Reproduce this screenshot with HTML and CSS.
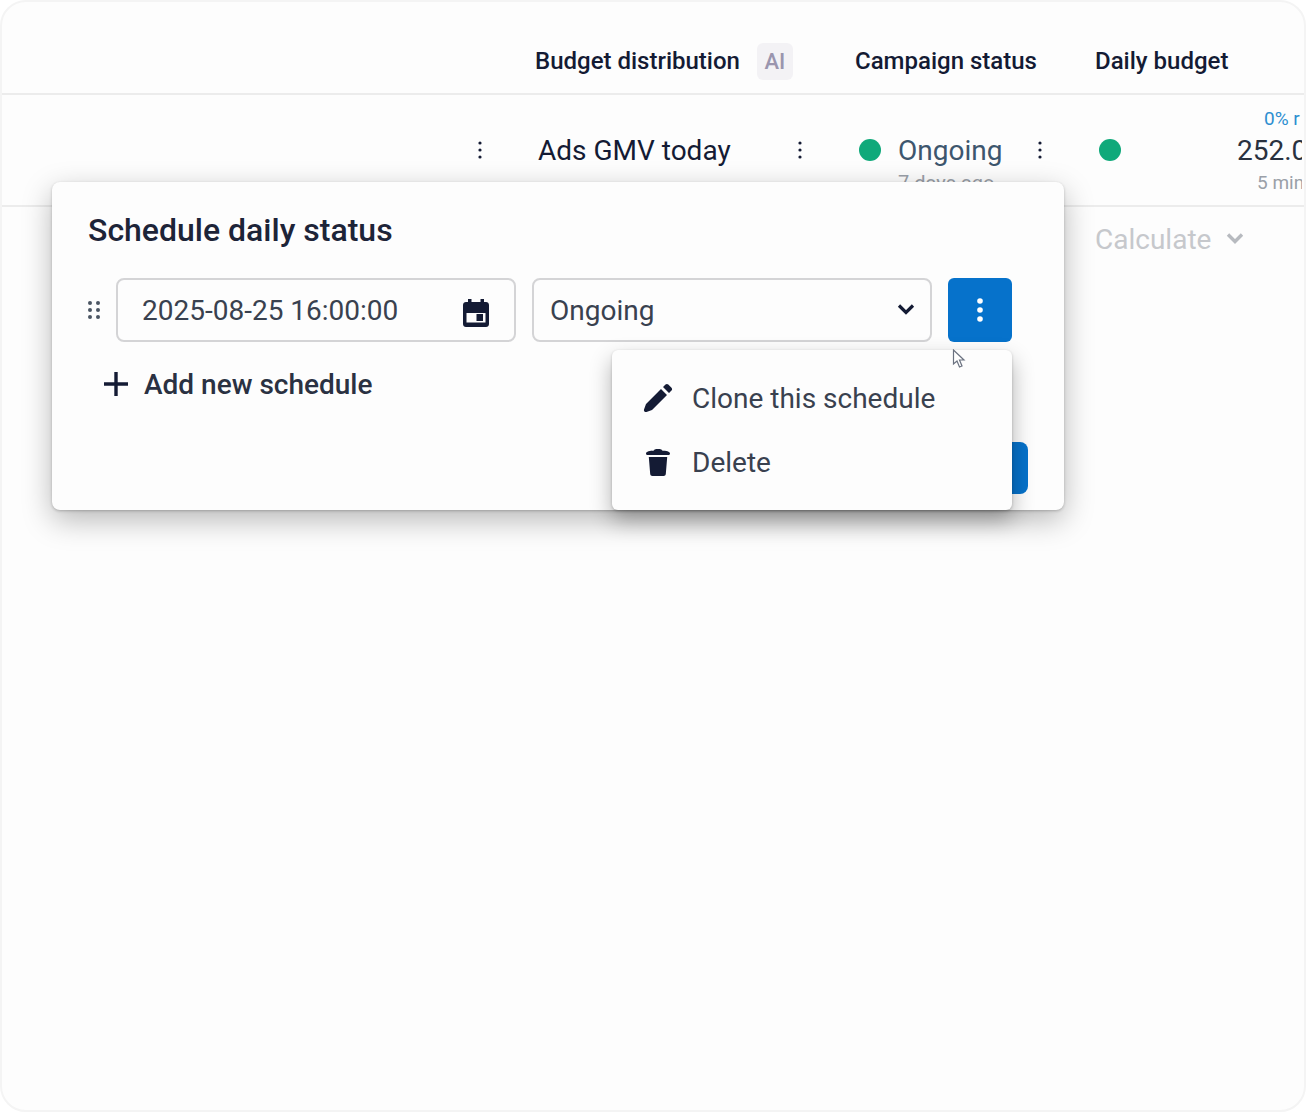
FILE: index.html
```html
<!DOCTYPE html>
<html lang="en">
<head>
<meta charset="UTF-8">
<title>Schedule daily status</title>
<link rel="stylesheet" href="styles.css">
</head>

<body>
  <div class="frame">
    <!-- table header -->
    <div class="table-row head-row">
      <div class="cell"></div>
      <div class="cell col-budget">Budget distribution <span class="ai-tag">AI</span></div>
      <div class="cell col-status">Campaign status</div>
      <div class="cell col-daily">Daily budget</div>
    </div>

    <!-- campaign row -->
    <div class="table-row body-row">
      <div class="cell cell-end">
        <svg class="kebab" viewBox="0 0 4 20"><circle cx="2" cy="3" r="1.6"/><circle cx="2" cy="10" r="1.6"/><circle cx="2" cy="17" r="1.6"/></svg>
      </div>
      <div class="cell col-budget cell-split">
        <span class="ads-text">Ads GMV today</span>
        <svg class="kebab" viewBox="0 0 4 20"><circle cx="2" cy="3" r="1.6"/><circle cx="2" cy="10" r="1.6"/><circle cx="2" cy="17" r="1.6"/></svg>
      </div>
      <div class="cell col-status cell-split">
        <span class="status">
          <i class="dot"></i>
          <span class="status-text">Ongoing<small>7 days ago</small></span>
        </span>
        <svg class="kebab" viewBox="0 0 4 20"><circle cx="2" cy="3" r="1.6"/><circle cx="2" cy="10" r="1.6"/><circle cx="2" cy="17" r="1.6"/></svg>
      </div>
      <div class="cell col-daily cell-split">
        <i class="dot"></i>
        <span class="amount">
          <em>0% r</em>
          <b>252.00</b>
          <small>5 min</small>
        </span>
      </div>
    </div>

    <!-- totals row -->
    <div class="table-row foot-row">
      <div class="cell"></div>
      <div class="cell"></div>
      <div class="cell"></div>
      <div class="cell col-daily calc">
        Calculate
        <svg class="calc-chevron" viewBox="0 0 18 12"><path d="M2 2.500l7 7 7-7" fill="none" stroke="currentColor" stroke-width="3.400"/></svg>
      </div>
    </div>

    <!-- dialog -->
    <div class="dialog">
      <h2>Schedule daily status</h2>

      <div class="schedule-line">
        <svg class="grip" viewBox="0 0 14 20"><circle cx="2" cy="3" r="2"/><circle cx="10" cy="3" r="2"/><circle cx="2" cy="10" r="2"/><circle cx="10" cy="10" r="2"/><circle cx="2" cy="17" r="2"/><circle cx="10" cy="17" r="2"/></svg>
        <div class="field field-date">
          <span>2025-08-25 16:00:00</span>
          <svg class="cal-icon" viewBox="0 0 28 28"><path d="M6 0h3.500v3h9V0H22v3h2c1.700 0 3 1.300 3 3v19c0 1.700-1.300 3-3 3H4c-1.700 0-3-1.300-3-3V6c0-1.700 1.300-3 3-3h2zM4.500 14v9.500h19V14zm10 1H21v7h-6.500z" fill-rule="evenodd"/></svg>
        </div>
        <div class="field field-select">
          <span>Ongoing</span>
          <svg class="sel-chevron" viewBox="0 0 18 12"><path d="M2 2.500l7 7 7-7" fill="none" stroke="currentColor" stroke-width="3.200"/></svg>
        </div>
        <button class="more-btn" type="button">
          <svg viewBox="0 0 6 24"><circle cx="3" cy="3" r="2.800"/><circle cx="3" cy="12" r="2.800"/><circle cx="3" cy="21" r="2.800"/></svg>
        </button>
      </div>

      <div class="add-line">
        <svg class="plus" viewBox="0 0 24 24"><path d="M12 0v24M0 12h24" fill="none" stroke="currentColor" stroke-width="3.400"/></svg>
        Add new schedule
      </div>

      <div class="dialog-foot">
        <button class="save-btn" type="button"></button>
      </div>

      <!-- action menu -->
      <div class="menu">
        <div class="menu-item">
          <svg class="menu-icon" viewBox="0 0 30 30"><path d="M1 26.500L3 21 18 6l6 6L9 27l-5.500 2c-1.500.500-3-.800-2.500-2.500zM20 4l2.500-2.500c.800-.800 2-.800 2.800 0l3.200 3.200c.800.800.800 2 0 2.800L26 10z"/></svg>
          Clone this schedule
        </div>
        <div class="menu-item">
          <svg class="menu-icon" viewBox="0 0 30 30"><path d="M11 3.500C11 2.500 12 2 15 2s4 .500 4 1.500c4 .300 8 1 8 3 0 1-.800 1.500-2 1.500H5C3.800 8 3 7.500 3 6.500c0-2 4-2.700 8-3zM5.800 10h18.400l-1.400 17c-.100 1.200-1 2-2.200 2H9.400c-1.200 0-2.100-.800-2.200-2z"/></svg>
          Delete
        </div>
      </div>
    </div>

    <!-- mouse pointer -->
    <svg class="pointer" viewBox="0 0 14 20"><path d="M1.500 1v14l3.500-3 2.500 6 2.500-1-2.500-6h4.500z" fill="#fff" stroke="#6b7280" stroke-width="1.200"/></svg>
  </div>
</body>
</html>
```

FILE: styles.css
```css
/* page */
*{ box-sizing:border-box }
html,body{ height:100% }
body{
  margin:0;
  background:#fff;
  color:#141b34;
  font-family:Roboto, "Liberation Sans", sans-serif;
}

.frame{
  position:relative;
  width:1306px;
  height:1112px;
  overflow:hidden;
  background:#fdfdfd;
  border:2px solid #f4f4f4;
  border-radius:26px;
}

/* table */
.table-row{
  display:grid;
  grid-template-columns:518px 320px 240px 1fr;
  border-bottom:2px solid #ececec;
}
.head-row{
  height:93px;
  padding-top:44px;
  font-size:24px;
  font-weight:500;
  line-height:30px;
}
.body-row{ height:112px }
.foot-row{
  height:66px;
  border-bottom:0;
}
.cell{ padding-left:15px; white-space:nowrap }
.cell-end{
  display:flex;
  justify-content:flex-end;
  align-items:center;
  padding-right:38px;
}
.cell-split{
  display:flex;
  align-items:center;
  justify-content:space-between;
  padding-right:38px;
}
.head-row .cell{ display:flex; align-items:flex-start }
.ai-tag{
  display:inline-block;
  width:36px;
  height:37px;
  margin:-3px 0 0 17px;
  line-height:37px;
  text-align:center;
  background:#f3f2f5;
  border-radius:6px;
  color:#9a95ae;
  font-weight:500;
  font-size:22px;
}
.kebab{
  width:4px;
  height:20px;
  fill:#141b34;
}
.ads-text{
  margin-left:3px;
  font-size:28px;
}
.status{
  display:flex;
  align-items:center;
  gap:17px;
  margin-left:4px;
}
.dot{
  display:block;
  width:22px;
  height:22px;
  flex:none;
  border-radius:50%;
  background:#0fa97a;
}
.status-text{
  position:relative;
  font-size:28px;
  color:#3d566e;
}
.status-text small{
  position:absolute;
  left:0;
  top:37px;
  font-size:20px;
  color:#9aa0a8;
  white-space:nowrap;
}
.col-daily.cell-split{
  justify-content:flex-start;
  margin-right:2px;
  padding-right:0;
  padding-left:19px;
  overflow:hidden;
}
.amount{
  display:flex;
  flex-direction:column;
  margin:2px 0 0 116px;
  font-size:28px;
}
.amount em{
  font-style:normal;
  font-size:19px;
  line-height:26px;
  margin-left:27px;
  color:#2e8fd0;
}
.amount b{ font-weight:400; line-height:38px; color:#29313f }
.amount small{
  font-size:19px;
  line-height:26px;
  margin-left:20px;
  color:#9aa0a8;
}
.calc{
  display:flex;
  align-items:center;
  gap:15px;
  height:64px;
  font-size:28px;
  color:#c6c8cc;
}
.calc-chevron{ width:18px; height:12px; margin-top:-2px; color:#b7babf }

/* dialog */
.dialog{
  position:absolute;
  left:50px;
  top:180px;
  width:1012px;
  height:328px;
  padding:28px 36px 0;
  background:#fdfdfd;
  border-radius:8px;
  box-shadow:0 1px 3px rgba(0,0,0,.22), 0 10px 30px rgba(0,0,0,.28);
}
.dialog h2{
  margin:0 0 28px;
  font-size:32px;
  line-height:40px;
  font-weight:500;
  color:#1d2438;
}
.schedule-line{
  display:flex;
  align-items:center;
  gap:16px;
  height:64px;
}
.grip{
  width:14px;
  height:20px;
  margin-right:-2px;
  fill:#4b5563;
}
.field{
  display:flex;
  align-items:center;
  justify-content:space-between;
  width:400px;
  height:64px;
  border:2px solid #d4d4d6;
  border-radius:8px;
  font-size:28px;
  color:#39414f;
}
.field-date{ padding:0 24px }
.field-select{ padding:0 15px 0 16px }
.cal-icon{ width:28px; height:28px; margin-top:6px; fill:#141b34 }
.sel-chevron{ width:18px; height:12px; margin-top:-3px; color:#141b34 }
.more-btn{
  display:flex;
  align-items:center;
  justify-content:center;
  width:64px;
  height:64px;
  padding:0;
  border:0;
  border-radius:6px;
  background:#0672cb;
}
.more-btn svg{ width:6px; height:24px; fill:#fff }
.add-line{
  display:flex;
  align-items:center;
  gap:16px;
  margin:25px 0 0 16px;
  height:34px;
  font-size:28px;
  font-weight:500;
  color:#2a3142;
}
.plus{ width:24px; height:24px; color:#141b34 }
.dialog-foot{
  display:flex;
  justify-content:flex-end;
  margin-top:41px;
}
.save-btn{
  width:120px;
  height:52px;
  border:0;
  border-radius:8px;
  background:#0672cb;
}

/* action menu */
.menu{
  position:absolute;
  left:560px;
  top:168px;
  width:400px;
  height:160px;
  padding:16px 0;
  background:#fdfdfd;
  border-radius:6px;
  box-shadow:0 1px 3px rgba(0,0,0,.2), 0 10px 22px rgba(0,0,0,.3);
}
.menu-item{
  display:flex;
  align-items:center;
  gap:19px;
  height:64px;
  padding-left:31px;
  font-size:28px;
  color:#39414f;
}
.menu-icon{ width:30px; height:30px; fill:#141b34 }

.pointer{
  position:absolute;
  left:950px;
  top:347px;
  width:14px;
  height:20px;
}
```
